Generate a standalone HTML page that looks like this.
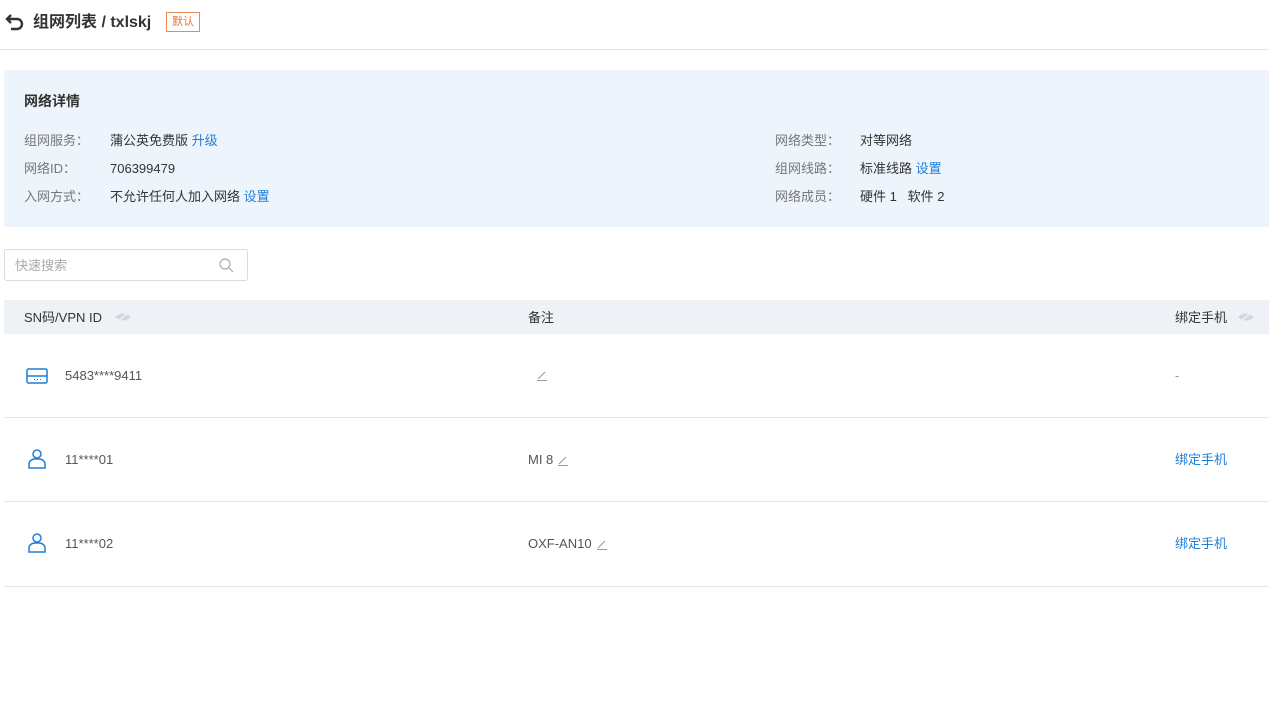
<!DOCTYPE html>
<html><head><meta charset="utf-8"><style>
body{margin:0;width:1269px;height:714px;background:#fff;font-family:"Liberation Sans","Noto Sans CJK SC",sans-serif;color:#333;position:relative;overflow:hidden;font-size:13px}
.a{position:absolute;white-space:nowrap;line-height:16px}
.blue{color:#1f7fd8}
.lbl{color:#777}
.row{position:absolute;left:4px;width:1265px;border-bottom:1px solid #e6e6e6}
.ed{display:inline-block;vertical-align:-2px;margin-left:4px}
</style></head><body>
<svg class="a" style="left:5px;top:12px" width="22" height="20" viewBox="0 0 22 20"><path d="M6 3 L2 7 L6 11" fill="none" stroke="#333" stroke-width="2.4"/><path d="M2 7 H12 A5 5 0 0 1 12 17 H6" fill="none" stroke="#333" stroke-width="2.4"/></svg>
<div class="a" style="left:33px;top:15px;font-size:16px;font-weight:bold;color:#333">组网列表 / txlskj</div>
<div class="a" style="left:166px;top:12px;border:1px solid #ec8a55;color:#e8743a;font-size:11px;padding:1px 5px;line-height:16px">默认</div>
<div class="a" style="left:0;top:49px;width:1269px;height:1px;background:#e4e4e4"></div>
<div class="a" style="left:4px;top:70px;width:1265px;height:157px;background:#edf4fc"></div>
<div class="a" style="left:24px;top:93px;font-size:14px;font-weight:bold">网络详情</div>
<div class="a lbl" style="left:24px;top:133px">组网服务：</div><div class="a" style="left:110px;top:133px">蒲公英免费版 <span class="blue">升级</span></div>
<div class="a lbl" style="left:24px;top:161px">网络ID：</div><div class="a" style="left:110px;top:161px">706399479</div>
<div class="a lbl" style="left:24px;top:189px">入网方式：</div><div class="a" style="left:110px;top:189px">不允许任何人加入网络 <span class="blue">设置</span></div>
<div class="a lbl" style="left:775px;top:133px">网络类型：</div><div class="a" style="left:860px;top:133px">对等网络</div>
<div class="a lbl" style="left:775px;top:161px">组网线路：</div><div class="a" style="left:860px;top:161px">标准线路 <span class="blue">设置</span></div>
<div class="a lbl" style="left:775px;top:189px">网络成员：</div><div class="a" style="left:860px;top:189px">硬件 1 &nbsp; 软件 2</div>
<div class="a" style="left:4px;top:249px;width:242px;height:30px;border:1px solid #dcdcdc;border-radius:3px"></div>
<div class="a" style="left:15px;top:258px;color:#aaa">快速搜索</div>
<svg class="a" style="left:218px;top:257px" width="16" height="16"><circle cx="7" cy="7" r="5" fill="none" stroke="#aaa" stroke-width="1.2"/><path d="M11 11 L15 15" stroke="#aaa" stroke-width="1.2"/></svg>
<div class="a" style="left:4px;top:300px;width:1265px;height:34px;background:#eef1f5"></div>
<div class="a" style="left:24px;top:310px">SN码/VPN ID</div>
<svg class="a" style="left:114px;top:311px" width="18" height="12"><path d="M1 6 Q9 -1 17 6 Q9 13 1 6Z" fill="#d2d7de"/><path d="M3 11 L15 1" stroke="#eef1f5" stroke-width="1.5"/></svg>
<div class="a" style="left:528px;top:310px">备注</div>
<div class="a" style="left:1175px;top:310px">绑定手机</div>
<svg class="a" style="left:1237px;top:311px" width="18" height="12"><path d="M1 6 Q9 -1 17 6 Q9 13 1 6Z" fill="#d2d7de"/><path d="M3 11 L15 1" stroke="#eef1f5" stroke-width="1.5"/></svg>
<div class="row" style="top:334px;height:83px"></div>
<svg class="a" style="left:26px;top:368px" width="22" height="16"><rect x="1" y="1" width="20" height="14" rx="1.5" fill="none" stroke="#1f7fd8" stroke-width="1.5"/><path d="M1 8 H21" stroke="#1f7fd8" stroke-width="1.5"/><path d="M8 11.5h1M11 11.5h1M14 11.5h1" stroke="#1f7fd8"/></svg>
<div class="a" style="left:65px;top:368px;color:#555">5483****9411</div>
<svg class="a" style="left:536px;top:369px" width="12" height="12"><path d="M2 10 L9 3 M1 11.5 H11" stroke="#999" stroke-width="1"/></svg>
<div class="a" style="left:1175px;top:368px;color:#999">-</div>
<div class="row" style="top:418px;height:83px"></div>
<svg class="a" style="left:27px;top:448px" width="20" height="22"><circle cx="10" cy="6" r="4" fill="none" stroke="#1f7fd8" stroke-width="1.5"/><path d="M2 20 V16 A6 5 0 0 1 8 11 H12 A6 5 0 0 1 18 16 V20 Z" fill="none" stroke="#1f7fd8" stroke-width="1.5"/></svg>
<div class="a" style="left:65px;top:452px;color:#555">11****01</div>
<div class="a" style="left:528px;top:452px;color:#555">MI 8<svg class="ed" width="12" height="12"><path d="M2 10 L9 3 M1 11.5 H11" stroke="#999" stroke-width="1"/></svg></div>
<div class="a blue" style="left:1175px;top:452px">绑定手机</div>
<div class="row" style="top:502px;height:84px"></div>
<svg class="a" style="left:27px;top:532px" width="20" height="22"><circle cx="10" cy="6" r="4" fill="none" stroke="#1f7fd8" stroke-width="1.5"/><path d="M2 20 V16 A6 5 0 0 1 8 11 H12 A6 5 0 0 1 18 16 V20 Z" fill="none" stroke="#1f7fd8" stroke-width="1.5"/></svg>
<div class="a" style="left:65px;top:536px;color:#555">11****02</div>
<div class="a" style="left:528px;top:536px;color:#555">OXF-AN10<svg class="ed" width="12" height="12"><path d="M2 10 L9 3 M1 11.5 H11" stroke="#999" stroke-width="1"/></svg></div>
<div class="a blue" style="left:1175px;top:536px">绑定手机</div>
</body></html>
